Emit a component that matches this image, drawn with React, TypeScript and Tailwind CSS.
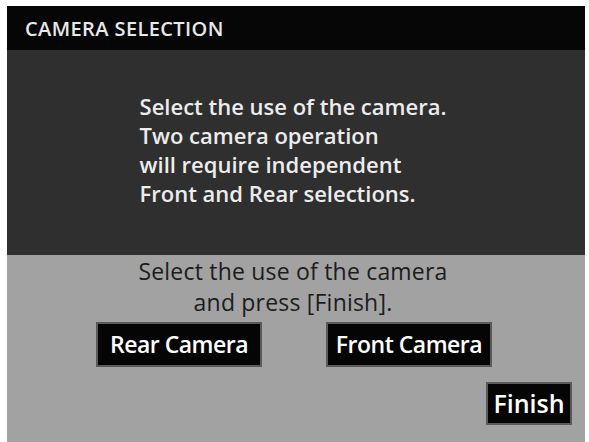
export default function App() {
  return (
    <div className="w-[589px] h-[442px] bg-white pl-[7px] pr-[4px] pt-[6px] overflow-hidden" style={{ fontFamily: '"Open Sans", "Noto Sans", sans-serif' }}>
      <div className="flex flex-col h-full">
        <div className="h-[44px] bg-[#060606] flex items-center pl-[18px]">
          <span className="text-[20px] font-semibold text-[#e8e8e8] tracking-[0.4px] leading-none mt-[1px]">CAMERA SELECTION</span>
        </div>
        <div className="h-[205px] bg-[#2f2f2f] flex justify-center pt-[42px] pr-[6px]">
          <div className="text-[22px] font-semibold text-[#ececec] leading-[29px] text-left">
            <div>Select the use of the camera.</div>
            <div>Two camera operation</div>
            <div>will require independent</div>
            <div>Front and Rear selections.</div>
          </div>
        </div>
        <div className="flex-1 bg-[#a2a2a2] flex flex-col items-center pt-[1px]">
          <div className="text-[23px] text-[#1c1c1c] leading-[31px] text-center pr-[6px] tracking-[0.2px]">
            <div>Select the use of the camera</div>
            <div>and press [Finish].</div>
          </div>
          <div className="flex gap-[64px] mt-[4px] w-full justify-center pr-[4px]">
            <button className="w-[166px] h-[45px] bg-[#050505] border-2 border-[#5a5a5a] text-white text-[23px] font-semibold tracking-[-0.5px]">Rear Camera</button>
            <button className="w-[166px] h-[45px] bg-[#050505] border-2 border-[#5a5a5a] text-white text-[23px] font-semibold tracking-[-0.5px]">Front Camera</button>
          </div>
          <div className="w-full flex justify-end pr-[13px] mt-[15px]">
            <button className="w-[86px] h-[43px] bg-[#050505] border-2 border-[#5a5a5a] text-white text-[25px] font-semibold">Finish</button>
          </div>
        </div>
      </div>
    </div>
  );
}
